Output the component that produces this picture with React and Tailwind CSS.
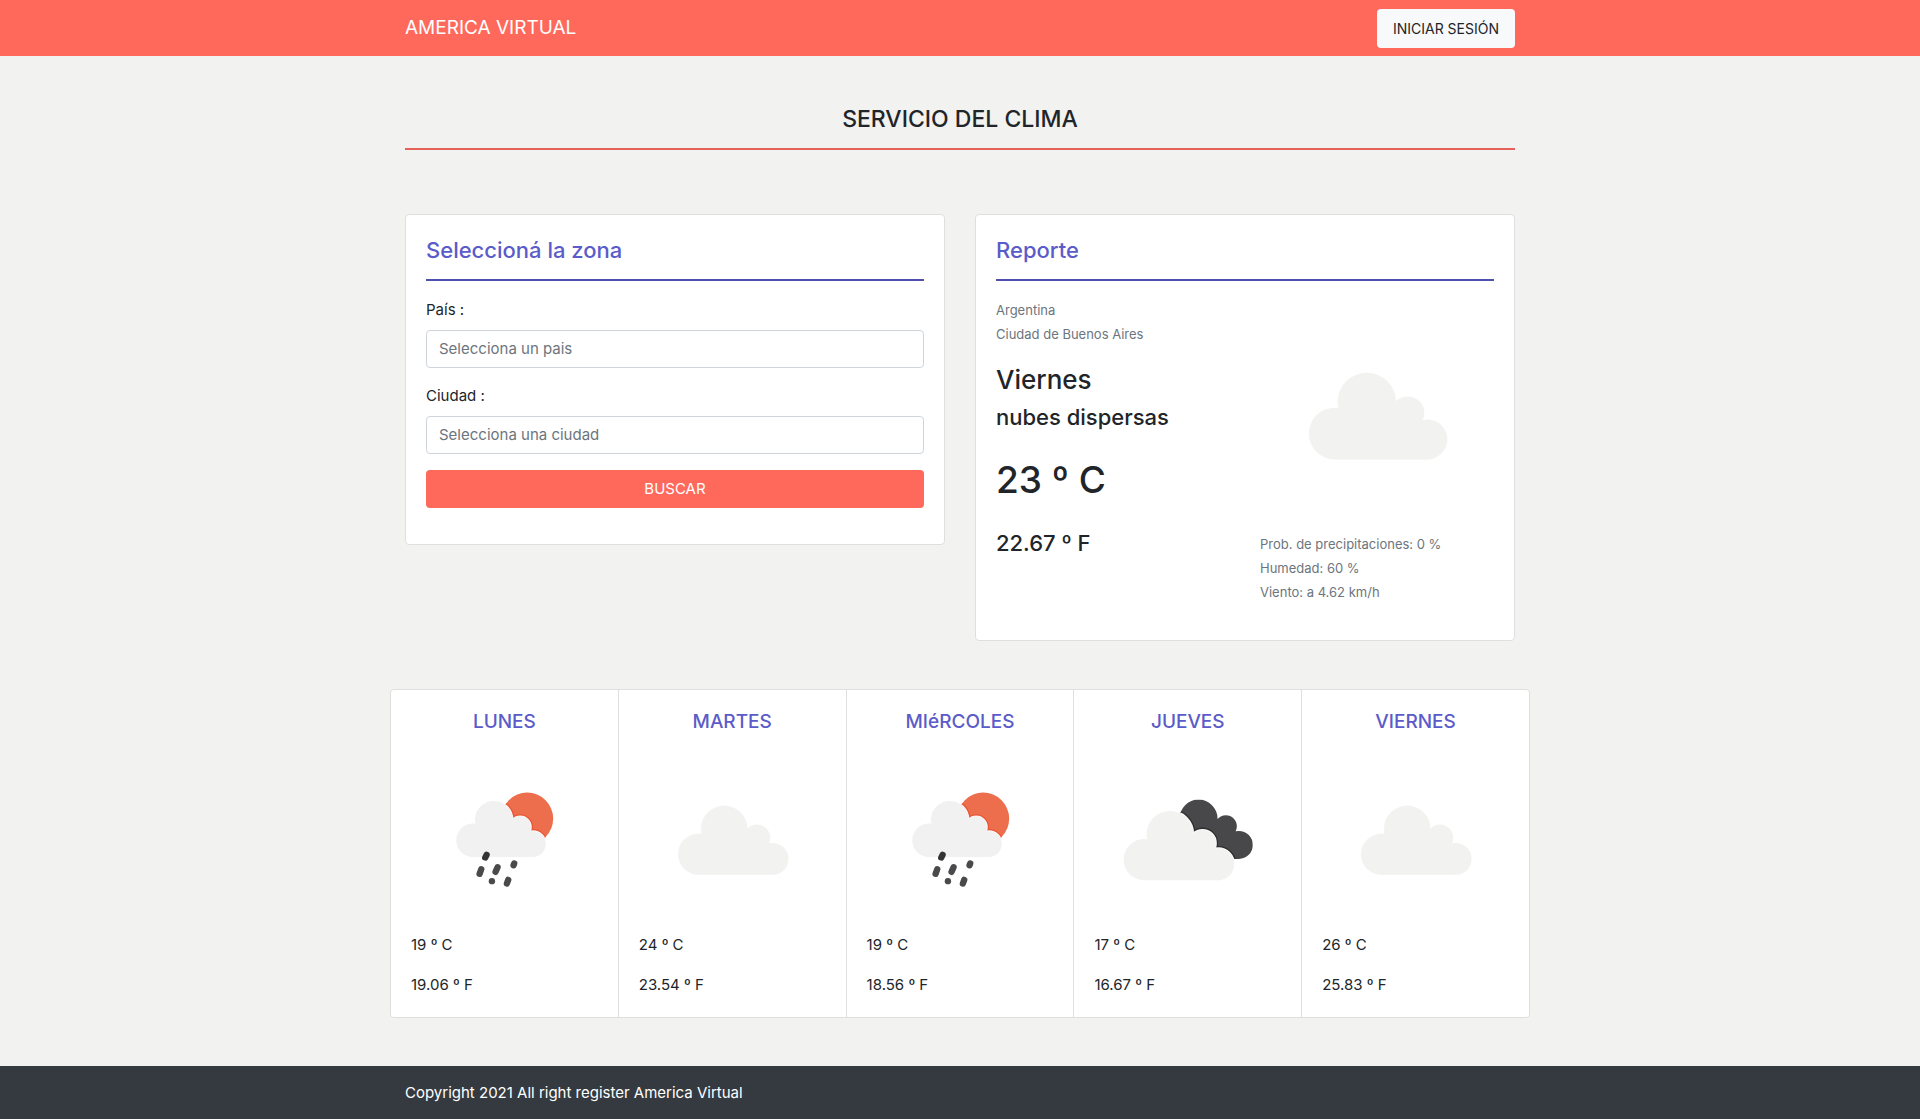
const LIGHT = "#f2f2f0";

function CloudShape({ fill, ...rest }) {
  return (
    <g fill={fill} {...rest}>
      <circle cx="62" cy="146" r="62" />
      <circle cx="139" cy="70" r="70" />
      <circle cx="237" cy="97" r="40" />
      <circle cx="284" cy="160" r="48" />
      <path d="M62 146 L139 70 L237 97 L284 160 V208 H62 Z" />
    </g>
  );
}

function Cloudy() {
  return (
    <svg viewBox="0 0 561 561" className="block aspect-square w-full" aria-hidden="true">
      <g transform="translate(117 179)">
        <CloudShape fill={LIGHT} />
      </g>
    </svg>
  );
}

function Rain({ id }) {
  return (
    <svg viewBox="-57 -75 561 561" className="block aspect-square w-full" aria-hidden="true">
      <defs>
        <clipPath id={id}>
          <circle cx="292" cy="143" r="78" />
        </clipPath>
      </defs>
      <circle cx="292" cy="143" r="78" fill="#ec6e4c" />
      <g clipPath={`url(#${id})`}>
        <g transform="translate(79 90) scale(0.81)">
          <CloudShape fill="#eb5636" stroke="#eb5636" strokeWidth="16" />
          <CloudShape fill="#f8f8f8" stroke="#f8f8f8" strokeWidth="6" />
        </g>
      </g>
      <g transform="translate(79 90) scale(0.81)">
        <CloudShape fill="#f1f1f2" />
      </g>
      <g stroke="#4a4a4c" strokeWidth="19" strokeLinecap="round">
        <path d="M170 252 L166 260" stroke="#343436" />
        <path d="M154 295 L149 309" />
        <path d="M203 289 L197 303" />
        <path d="M253 278 L251 283" />
        <path d="M186 331 L186 331" />
        <path d="M235 327 L231 338" />
      </g>
    </svg>
  );
}

function BrokenClouds() {
  return (
    <svg viewBox="-47 -105 561 561" className="block aspect-square w-full" aria-hidden="true">
      <defs>
        <clipPath id="back-cloud">
          <circle cx="267" cy="113" r="57" />
          <circle cx="349" cy="136" r="33" />
          <circle cx="388" cy="192" r="42" />
          <path d="M267 113 L349 136 L388 192 V234 H300 L220 150 Z" />
        </clipPath>
      </defs>
      <g clipPath="url(#back-cloud)">
        <path d="M150 40 H450 V250 H150 Z" fill="#48484a" />
        <g transform="translate(42 90)">
          <CloudShape fill="#2e2e30" stroke="#2e2e30" strokeWidth="14" />
          <CloudShape fill="#fafafa" stroke="#fafafa" strokeWidth="6" />
        </g>
      </g>
      <g transform="translate(42 90)">
        <CloudShape fill={LIGHT} />
      </g>
    </svg>
  );
}

const days = [
  { name: "LUNES", c: "19", f: "19.06", icon: <Rain id="sun-lunes" /> },
  { name: "MARTES", c: "24", f: "23.54", icon: <Cloudy /> },
  { name: "MIéRCOLES", c: "19", f: "18.56", icon: <Rain id="sun-miercoles" /> },
  { name: "JUEVES", c: "17", f: "16.67", icon: <BrokenClouds /> },
  { name: "VIERNES", c: "26", f: "25.83", icon: <Cloudy /> },
];

function Card({ title, children }) {
  return (
    <section className="rounded border border-[#dfdfdf] bg-white p-5">
      <h2 className="border-b-2 border-[#4f4fb0] pb-3.5 text-[22px] leading-[30px] font-medium text-[#5b5bc9]">
        {title}
      </h2>
      <div className="pt-[17px] pb-4">{children}</div>
    </section>
  );
}

function Field({ id, label, placeholder }) {
  return (
    <div className="flex flex-col gap-2">
      <label htmlFor={id}>{label}</label>
      <input
        id={id}
        type="text"
        placeholder={placeholder}
        className="w-full rounded border border-[#ced4da] bg-white px-3 py-1.5 leading-6 placeholder:text-[#6c757d]"
      />
    </div>
  );
}

function Note({ children }) {
  return (
    <p>
      <small className="text-[13px] text-[#6c757d]">{children}</small>
    </p>
  );
}

export default function App() {
  return (
    <div className="flex min-h-screen flex-col bg-[#f2f2f0] font-['Inter',sans-serif] text-[15px] leading-6 text-[#212529]">
      <header className="bg-[#ff695c]">
        <nav className="mx-auto flex h-14 w-full max-w-[1140px] items-center justify-between px-[15px]">
          <a href="#" className="text-[19px] text-white">AMERICA VIRTUAL</a>
          <button type="button" className="mt-px rounded bg-[#f8f9fa] px-4 py-2 text-sm leading-[23px]">
            INICIAR SESIÓN
          </button>
        </nav>
      </header>

      <main className="mx-auto w-full max-w-[1140px] flex-1 pt-12">
        <div className="px-[15px]">
          <h1 className="border-b-2 border-[#e5615a] pb-3.5 text-center text-[23px] leading-[30px] font-medium">
            SERVICIO DEL CLIMA
          </h1>
          <div className="grid items-start gap-[30px] pt-16 md:grid-cols-2">
            <Card title="Seleccioná la zona">
              <form className="flex flex-col gap-4">
                <Field id="pais" label="País :" placeholder="Selecciona un pais" />
                <Field id="ciudad" label="Ciudad :" placeholder="Selecciona una ciudad" />
                <button type="button" className="rounded bg-[#ff695c] py-[7px] text-white">BUSCAR</button>
              </form>
            </Card>

            <Card title="Reporte">
              <div className="grid grid-cols-2 gap-[30px]">
                <div>
                  <Note>Argentina</Note>
                  <Note>Ciudad de Buenos Aires</Note>
                  <h3 className="mt-4 text-[26px] leading-9 font-medium">Viernes</h3>
                  <h4 className="mt-1 text-[22px] leading-[30px] font-medium">nubes dispersas</h4>
                  <p className="mt-6 text-[37px] leading-[48px] font-medium">23 º C</p>
                  <p className="mt-6 text-[22px] leading-[30px] font-medium">22.67 º F</p>
                </div>
                <div>
                  <Cloudy />
                  <Note>Prob. de precipitaciones: 0 %</Note>
                  <Note>Humedad: 60 %</Note>
                  <Note>Viento: a 4.62 km/h</Note>
                </div>
              </div>
            </Card>
          </div>
        </div>

        <section className="mt-12 mb-12 grid grid-cols-5 gap-px overflow-hidden rounded border border-[#dfdfdf] bg-[#dfdfdf]">
          {days.map((day) => (
            <article key={day.name} className="bg-white p-5">
              <h3 className="mb-3 text-center text-[19px] leading-6 font-medium text-[#5b5bc9]">{day.name}</h3>
              {day.icon}
              <p>{day.c} º C</p>
              <p className="mt-4">{day.f} º F</p>
            </article>
          ))}
        </section>
      </main>

      <footer className="bg-[#343a40] text-white">
        <p className="mx-auto w-full max-w-[1140px] px-[15px] py-[15px]">
          Copyright 2021 All right register America Virtual
        </p>
      </footer>
    </div>
  );
}
